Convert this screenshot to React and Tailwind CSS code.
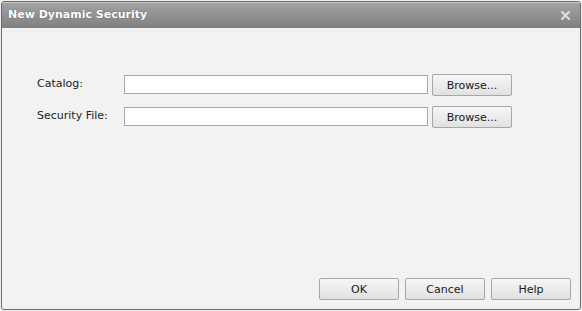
import React from "react";

const font = { fontFamily: '"DejaVu Sans", Verdana, sans-serif' };

const Btn = ({ children }) => (
  <button className="w-[80px] h-[22px] border border-[#a7a7a7] rounded-[2px] bg-gradient-to-b from-[#f6f6f6] to-[#e1e1e1] text-[11px] text-[#1a1a1a] leading-none">
    {children}
  </button>
);

const Row = ({ label }) => (
  <div className="flex items-center h-[22px]">
    <span className="w-[87px] text-[11px] text-[#222]">{label}</span>
    <input className="w-[304px] h-[19px] border border-[#a9a9a9] bg-white outline-none" />
    <div className="ml-[4px]">
      <Btn>Browse...</Btn>
    </div>
  </div>
);

export default function App() {
  return (
    <div className="w-[582px] h-[311px] bg-[#f0f0f0] p-[1px]" style={font}>
      <div className="w-full h-full flex flex-col border border-[#6a6a6a] rounded-[3px] bg-[#f2f2f2] overflow-hidden">
        <div className="h-[26px] flex items-center justify-between pl-[6px] pr-[10px] bg-gradient-to-b from-[#a2a2a2] to-[#808080] border-t border-[#c8c8c8]">
          <span className="text-[11px] font-bold text-white [text-shadow:0_0_1px_#555]">
            New Dynamic Security
          </span>
          <svg width="9" height="9" viewBox="0 0 9 9">
            <path d="M1 1 L8 8 M8 1 L1 8" stroke="#dcdcdc" strokeWidth="2.2" strokeLinecap="square" />
          </svg>
        </div>
        <div className="flex-1 flex flex-col pl-[35px] pt-[45px] gap-[10px]">
          <Row label="Catalog:" />
          <Row label="Security File:" />
        </div>
        <div className="flex justify-end gap-[6px] pr-[9px] pb-[9px]">
          <Btn>OK</Btn>
          <Btn>Cancel</Btn>
          <Btn>Help</Btn>
        </div>
      </div>
    </div>
  );
}
